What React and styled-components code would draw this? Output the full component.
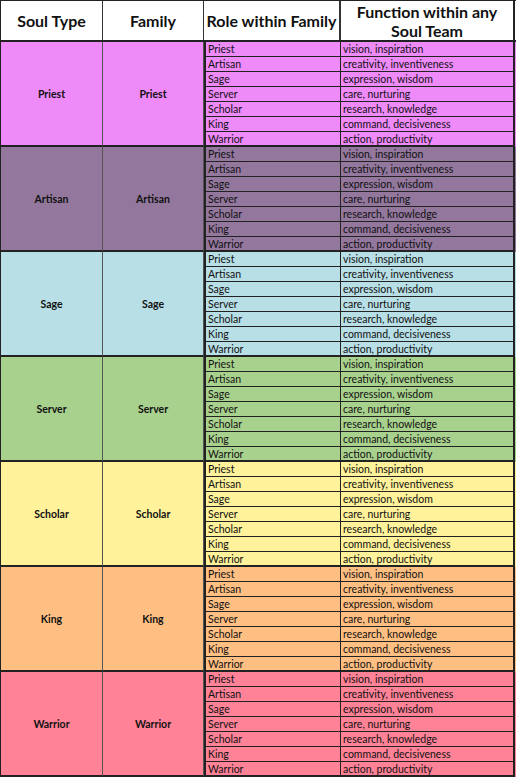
import React from "react";
import styled, { createGlobalStyle } from "styled-components";

const GlobalStyle = createGlobalStyle`
  body {
    margin: 0;
    background: #fff;
    font-family: Lato, "Open Sans", "Liberation Sans", sans-serif;
  }
`;

const families = [
  { name: "Priest", color: "#ef8af9" },
  { name: "Artisan", color: "#93779d" },
  { name: "Sage", color: "#b8dfe6" },
  { name: "Server", color: "#a9d18e" },
  { name: "Scholar", color: "#fff29a" },
  { name: "King", color: "#ffbf82" },
  { name: "Warrior", color: "#ff8297" },
];

const roles = [
  ["Priest", "vision, inspiration"],
  ["Artisan", "creativity, inventiveness"],
  ["Sage", "expression, wisdom"],
  ["Server", "care, nurturing"],
  ["Scholar", "research, knowledge"],
  ["King", "command, decisiveness"],
  ["Warrior", "action, productivity"],
];

export default () => {
  return (
    <>
      <GlobalStyle />
      <Table>
        <HeadRow>
          <Head>Soul Type</Head>
          <Head>Family</Head>
          <Head $role>Role within Family</Head>
          <Head>
            Function within any
            <br />
            Soul Team
          </Head>
        </HeadRow>
        {families.map((fam) => (
          <Group key={fam.name} $bg={fam.color}>
            <Label>{fam.name}</Label>
            <Label>{fam.name}</Label>
            {roles.map(([role, fn], ix) => (
              <React.Fragment key={role}>
                <RoleCell $last={ix === 6}>{role}</RoleCell>
                <Cell $last={ix === 6}>{fn}</Cell>
              </React.Fragment>
            ))}
          </Group>
        ))}
      </Table>
    </>
  );
};

//styling
const cols = "102px 101px 137px 174px";

const Table = styled.div`
  width: 516px;
  height: 781px;
  overflow: hidden;
  background: #fff;
  color: #111;
`;

const HeadRow = styled.div`
  display: grid;
  grid-template-columns: ${cols};
  height: 42px;
  box-sizing: border-box;
  border-top: 1px solid #222;
  border-left: 1px solid #222;
  border-bottom: 2px solid #222;
  width: 516px;
`;

const Head = styled.div`
  display: flex;
  align-items: center;
  justify-content: center;
  text-align: center;
  font-size: 16px;
  font-weight: 700;
  line-height: 19px;
  background: #fff;
  border-right: ${(p) => (p.$role ? "2px" : "1px")} solid #333;
  &:last-child {
    border-right: 2px solid #222;
  }
`;

const Group = styled.div`
  display: grid;
  grid-template-columns: ${cols};
  grid-template-rows: repeat(7, 15px);
  grid-auto-flow: column;
  background: ${(p) => p.$bg};
  border-left: 1px solid #222;
  width: 516px;
  box-sizing: border-box;
`;

const Label = styled.div`
  grid-row: 1 / 8;
  display: flex;
  align-items: center;
  justify-content: center;
  font-size: 10.5px;
  font-weight: 700;
  border-right: 1px solid #555;
  border-bottom: 2px solid #222;
`;

const Cell = styled.div`
  box-sizing: border-box;
  padding: 1px 2px 0;
  font-size: 10.5px;
  line-height: 13px;
  white-space: nowrap;
  overflow: hidden;
  border-bottom: ${(p) => (p.$last ? "2px" : "1px")} solid #222;
  border-right: 2px solid #222;
  grid-column: 4;
`;

const RoleCell = styled(Cell)`
  grid-column: 3;
  border-left: 2px solid #222;
  border-right: 1px solid #222;
`;
